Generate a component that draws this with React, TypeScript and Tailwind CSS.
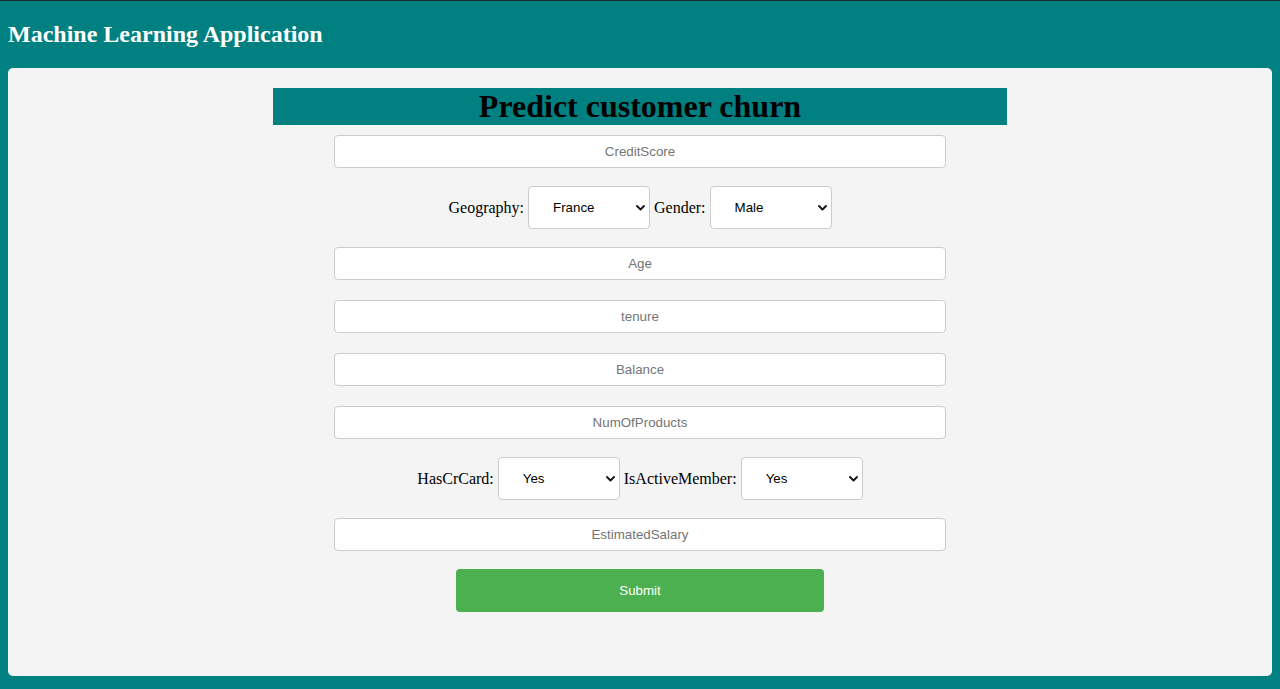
import React from "react";

function Chevron() {
  return (
    <svg
      className="pointer-events-none absolute right-[5px] top-1/2 -translate-y-1/2"
      width="9"
      height="6"
      viewBox="0 0 9 6"
      fill="none"
    >
      <polyline points="1,1 4.5,4.5 8,1" stroke="#111" strokeWidth="1.8" strokeLinecap="round" strokeLinejoin="round" />
    </svg>
  );
}

function Select({ options }: { options: string[] }) {
  return (
    <div className="relative h-[43px] w-[122px]">
      <select className="h-full w-full appearance-none rounded-[4px] border border-[#ccc] bg-white pl-[24px] pr-[16px] text-[13.333px] text-black outline-none [font-family:'Liberation_Sans',Arial,sans-serif]">
        {options.map((o) => (
          <option key={o}>{o}</option>
        ))}
      </select>
      <Chevron />
    </div>
  );
}

function Input({ placeholder, className = "" }: { placeholder: string; className?: string }) {
  return (
    <input
      type="text"
      placeholder={placeholder}
      className={
        "block h-[33px] w-[612px] rounded-[4px] border border-[#ccc] bg-white text-center text-[13.333px] text-black outline-none placeholder:text-[#757575] [font-family:'Liberation_Sans',Arial,sans-serif] " +
        className
      }
    />
  );
}

function Label({ children }: { children: React.ReactNode }) {
  return (
    <span className="text-[16px] leading-[18px] text-black [font-family:'Liberation_Serif','Times_New_Roman',serif]">
      {children}
    </span>
  );
}

export default function App() {
  return (
    <div className="min-h-screen border-t border-[#1e2a2a] bg-[#008080] pb-[13px]">
      <h2 className="pl-2 pt-[19px] text-[24px] font-bold leading-[28px] text-white [font-family:'Liberation_Serif','Times_New_Roman',serif]">
        Machine Learning Application
      </h2>
      <div className="mx-2 mt-[20px] rounded-[5px] bg-[#f4f4f4] px-5 pb-[64px] pt-5">
        <div className="flex flex-col items-center">
          <h1 className="h-[37px] w-[60%] bg-[#008080] text-center text-[32px] font-bold leading-[37px] text-black [font-family:'Liberation_Serif','Times_New_Roman',serif]">
            Predict customer churn
          </h1>
          <Input placeholder="CreditScore" className="mt-[10px]" />
          <div className="mt-[18px] flex h-[43px] items-center justify-center gap-[4px]">
            <Label>Geography:</Label>
            <Select options={["France", "Germany", "Spain"]} />
            <Label>Gender:</Label>
            <Select options={["Male", "Female"]} />
          </div>
          <Input placeholder="Age" className="mt-[18px]" />
          <Input placeholder="tenure" className="mt-[20px]" />
          <Input placeholder="Balance" className="mt-[20px]" />
          <Input placeholder="NumOfProducts" className="mt-[20px]" />
          <div className="mt-[18px] flex h-[43px] items-center justify-center gap-[4px]">
            <Label>HasCrCard:</Label>
            <Select options={["Yes", "No"]} />
            <Label>IsActiveMember:</Label>
            <Select options={["Yes", "No"]} />
          </div>
          <Input placeholder="EstimatedSalary" className="mt-[18px]" />
          <button
            type="button"
            className="mt-[18px] h-[43px] w-[368px] rounded-[4px] bg-[#4caf50] text-[13.333px] text-white [font-family:'Liberation_Sans',Arial,sans-serif]"
          >
            Submit
          </button>
        </div>
      </div>
    </div>
  );
}
